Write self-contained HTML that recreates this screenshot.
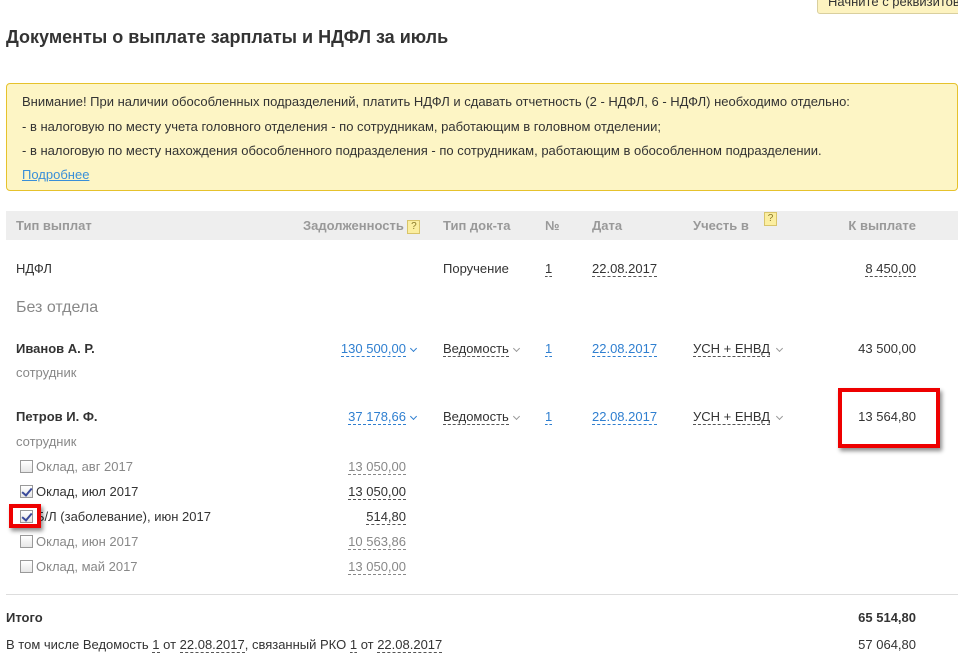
<!DOCTYPE html>
<html><head><meta charset="utf-8"><style>
*{margin:0;padding:0;box-sizing:border-box}
body{width:958px;height:669px;overflow:hidden;background:#fff;position:relative;font-family:"Liberation Sans",Arial,sans-serif;font-size:13px;color:#333}
.t{position:absolute;white-space:nowrap;line-height:16px}
.r{text-align:right}
.d{border-bottom:1px dashed #555;line-height:15px}
.bd{border-bottom:1px dashed #2f7fd0;line-height:15px;color:#2f7fd0}
.g{color:#888}
.gd{border-bottom:1px dashed #888;line-height:15px;color:#888}
.h{color:#999;font-weight:bold}
.cv{position:absolute;width:5px;height:5px;border:solid #999;border-width:0 1px 1px 0;transform:rotate(45deg)}
.cvb{border-color:#2f7fd0}
.q{display:inline-block;width:13px;height:14px;background:#fbeea0;border:1px solid #d8c46a;color:#8a7a2a;font-size:10px;line-height:12px;text-align:center;vertical-align:middle;font-weight:normal}
.cb{position:absolute;width:13px;height:13px;border:1px solid #999;background:linear-gradient(#fff,#e6e6e6)}
.ck::after{content:"";position:absolute;left:3px;top:0px;width:4px;height:8px;border:solid #3a4a9a;border-width:0 2px 2px 0;transform:rotate(40deg)}
.red{position:absolute;border:4px solid #e00;box-shadow:2px 3px 4px rgba(0,0,0,.45)}
</style></head><body>
<div style="position:absolute;left:817px;top:-6px;width:150px;height:20px;background:#fdf3c0;border:1px solid #d9cf9e;border-radius:3px"></div>
<div class="t" style="left:828px;top:-6px;color:#333">Начните с реквизитов</div>

<div class="t" style="left:6px;top:27px;font-size:18px;font-weight:bold;line-height:20px;color:#333">Документы о выплате зарплаты и НДФЛ за июль</div>

<div style="position:absolute;left:6px;top:83px;width:952px;height:108px;background:#fdf5c5;border:1px solid #e6c22c;border-radius:4px"></div>
<div class="t" style="left:22px;top:94px">Внимание! При наличии обособленных подразделений, платить НДФЛ и сдавать отчетность (2 - НДФЛ, 6 - НДФЛ) необходимо отдельно:</div>
<div class="t" style="left:22px;top:119px">- в налоговую по месту учета головного отделения - по сотрудникам, работающим в головном отделении;</div>
<div class="t" style="left:22px;top:143px">- в налоговую по месту нахождения обособленного подразделения - по сотрудникам, работающим в обособленном подразделении.</div>
<div class="t" style="left:22px;top:167px;color:#3a8fd8;text-decoration:underline">Подробнее</div>

<div style="position:absolute;left:6px;top:211px;width:952px;height:29px;background:#eeeeee"></div>
<div class="t h" style="left:16px;top:218px">Тип выплат</div>
<div class="t h" style="left:303px;top:218px">Задолженность <span class="q">?</span></div>
<div class="t h" style="left:443px;top:218px">Тип док-та</div>
<div class="t h" style="left:545px;top:218px">№</div>
<div class="t h" style="left:592px;top:218px">Дата</div>
<div class="t h" style="left:693px;top:218px">Учесть в</div>
<div class="q" style="position:absolute;left:764px;top:212px">?</div>
<div class="t h r" style="right:42px;top:218px">К выплате</div>

<div class="t" style="left:16px;top:261px">НДФЛ</div>
<div class="t" style="left:443px;top:261px">Поручение</div>
<div class="t d" style="left:545px;top:261px">1</div>
<div class="t d" style="left:592px;top:261px">22.08.2017</div>
<div class="t d r" style="right:42px;top:261px">8 450,00</div>

<div class="t" style="left:16px;top:299px;font-size:16px;line-height:18px;color:#888">Без отдела</div>

<div class="t" style="left:16px;top:341px;font-weight:bold">Иванов А. Р.</div>
<div class="t bd r" style="right:552px;top:341px">130 500,00</div><div class="cv cvb" style="left:411px;top:346px"></div>
<div class="t d" style="left:443px;top:341px">Ведомость</div><div class="cv" style="left:514px;top:346px"></div>
<div class="t bd" style="left:545px;top:341px">1</div>
<div class="t bd" style="left:592px;top:341px">22.08.2017</div>
<div class="t d" style="left:693px;top:341px">УСН + ЕНВД</div><div class="cv" style="left:777px;top:346px"></div>
<div class="t r" style="right:42px;top:341px">43 500,00</div>
<div class="t g" style="left:16px;top:365px">сотрудник</div>

<div class="t" style="left:16px;top:409px;font-weight:bold">Петров И. Ф.</div>
<div class="t bd r" style="right:552px;top:409px">37 178,66</div><div class="cv cvb" style="left:411px;top:414px"></div>
<div class="t d" style="left:443px;top:409px">Ведомость</div><div class="cv" style="left:514px;top:414px"></div>
<div class="t bd" style="left:545px;top:409px">1</div>
<div class="t bd" style="left:592px;top:409px">22.08.2017</div>
<div class="t d" style="left:693px;top:409px">УСН + ЕНВД</div><div class="cv" style="left:777px;top:414px"></div>
<div class="t r" style="right:42px;top:409px">13 564,80</div>
<div class="t g" style="left:16px;top:434px">сотрудник</div>
<div class="red" style="left:838px;top:388px;width:102px;height:60px"></div>

<div class="cb" style="left:20px;top:460px"></div><div class="t g" style="left:36px;top:459px">Оклад, авг 2017</div><div class="t gd r" style="right:552px;top:459px">13 050,00</div>
<div class="cb ck" style="left:20px;top:485px"></div><div class="t" style="left:36px;top:484px">Оклад, июл 2017</div><div class="t d r" style="right:552px;top:484px">13 050,00</div>
<div class="cb ck" style="left:20px;top:510px"></div><div class="t" style="left:36px;top:509px">Б/Л (заболевание), июн 2017</div><div class="t d r" style="right:552px;top:509px">514,80</div>
<div class="cb" style="left:20px;top:535px"></div><div class="t g" style="left:36px;top:534px">Оклад, июн 2017</div><div class="t gd r" style="right:552px;top:534px">10 563,86</div>
<div class="cb" style="left:20px;top:560px"></div><div class="t g" style="left:36px;top:559px">Оклад, май 2017</div><div class="t gd r" style="right:552px;top:559px">13 050,00</div>
<div class="red" style="left:9px;top:504px;width:32px;height:24px"></div>

<div style="position:absolute;left:6px;top:594px;width:952px;height:1px;background:#ddd"></div>
<div class="t" style="left:6px;top:610px;font-weight:bold">Итого</div>
<div class="t r" style="right:42px;top:610px;font-weight:bold">65 514,80</div>
<div class="t" style="left:6px;top:637px">В том числе Ведомость <span class="d">1</span> от <span class="d">22.08.2017</span>, связанный РКО <span class="d">1</span> от <span class="d">22.08.2017</span></div>
<div class="t r" style="right:42px;top:637px">57 064,80</div>
</body></html>
